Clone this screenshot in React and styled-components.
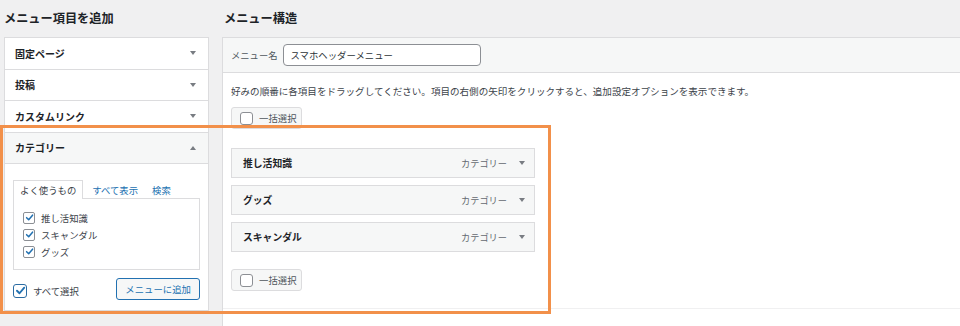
import React from "react";
import styled, { createGlobalStyle } from "styled-components";

const GlobalStyle = createGlobalStyle`
  body {
    margin: 0;
    background: #f0f0f1;
    font-family: "Noto Sans CJK JP", "Noto Sans", sans-serif;
    color: #3c434a;
  }
`;

const Triangle = ({ up }) => (
  <svg width="6" height="4" viewBox="0 0 6 4" style={{ display: "block" }}>
    <path d={up ? "M0 4 L3 0 L6 4 Z" : "M0 0 L6 0 L3 4 Z"} fill="#787c82" />
  </svg>
);

const Check = ({ big }) => (
  <CheckBox $big={big}>
    <svg width={big ? 11 : 9} height={big ? 11 : 9} viewBox="0 0 10 10">
      <path d="M1.8 5.2 L4.1 7.5 L8.4 2.4" fill="none" stroke="#2271b1" strokeWidth="1.7" strokeLinecap="round" strokeLinejoin="round" />
    </svg>
  </CheckBox>
);

const sections = [
  { label: "固定ページ" },
  { label: "投稿" },
  { label: "カスタムリンク" },
];

const categories = ["推し活知識", "スキャンダル", "グッズ"];
const menuItems = ["推し活知識", "グッズ", "スキャンダル"];

const App = () => {
  return (
    <>
      <GlobalStyle />
      <Page>
        <LeftColumn>
          <ColumnTitle>メニュー項目を追加</ColumnTitle>
          <Accordion>
            {sections.map((s) => (
              <SectionTitle key={s.label}>
                {s.label}
                <Triangle />
              </SectionTitle>
            ))}
            <SectionTitle $open>
              カテゴリー
              <Triangle up />
            </SectionTitle>
            <CategoryBody>
              <Tabs>
                <Tab $active>よく使うもの</Tab>
                <Tab>すべて表示</Tab>
                <Tab>検索</Tab>
              </Tabs>
              <CheckList>
                {categories.map((c) => (
                  <CheckRow key={c}>
                    <Check />
                    {c}
                  </CheckRow>
                ))}
              </CheckList>
              <ActionRow>
                <SelectAll>
                  <Check big />
                  すべて選択
                </SelectAll>
                <AddButton>メニューに追加</AddButton>
              </ActionRow>
            </CategoryBody>
          </Accordion>
        </LeftColumn>

        <RightColumn>
          <ColumnTitle $inset>メニュー構造</ColumnTitle>
          <MenuPanel>
            <PanelHeader>
              メニュー名
              <NameInput defaultValue="スマホヘッダーメニュー" />
            </PanelHeader>
            <PanelBody>
              <Hint>好みの順番に各項目をドラッグしてください。項目の右側の矢印をクリックすると、追加設定オプションを表示できます。</Hint>
              <BulkSelect>
                <EmptyBox />
                一括選択
              </BulkSelect>
              <ItemList>
                {menuItems.map((m) => (
                  <MenuItem key={m}>
                    <ItemTitle>{m}</ItemTitle>
                    <ItemMeta>
                      カテゴリー
                      <Triangle />
                    </ItemMeta>
                  </MenuItem>
                ))}
              </ItemList>
              <BulkSelect $bottom>
                <EmptyBox />
                一括選択
              </BulkSelect>
            </PanelBody>
            <PanelFooter />
          </MenuPanel>
        </RightColumn>

        <Highlight />
      </Page>
    </>
  );
};

const Page = styled.div`
  position: relative;
  display: flex;
  gap: 13px;
  padding-left: 4px;
  height: 326px;
  overflow: hidden;
`;

const LeftColumn = styled.div`
  width: 205px;
  flex-shrink: 0;
`;

const RightColumn = styled.div`
  width: 760px;
  flex-shrink: 0;
`;

const ColumnTitle = styled.h2`
  margin: 0;
  height: 37px;
  display: flex;
  align-items: center;
  padding-left: ${(p) => (p.$inset ? "2px" : "0")};
  padding-bottom: 2px;
  box-sizing: border-box;
  font-size: 12.2px;
  font-weight: 700;
  color: #1d2327;
`;

const Accordion = styled.div`
  border: 1px solid #dcdcde;
  background: #fff;
`;

const SectionTitle = styled.div`
  height: 30.5px;
  display: flex;
  align-items: center;
  justify-content: space-between;
  padding: 0 12px 0 10px;
  border-bottom: 1px solid #dcdcde;
  background: ${(p) => (p.$open ? "#f6f7f7" : "#fff")};
  font-size: 10px;
  font-weight: 700;
  color: #1d2327;
`;

const CategoryBody = styled.div`
  padding: 16px 8px 10px;
`;

const Tabs = styled.div`
  display: flex;
  align-items: stretch;
  height: 19px;
  gap: 9px;
`;

const Tab = styled.div`
  display: flex;
  align-items: center;
  padding: 0 ${(p) => (p.$active ? "6px" : "0")};
  margin-right: ${(p) => (p.$active ? "0" : "5px")};
  font-size: 9.4px;
  color: ${(p) => (p.$active ? "#3c434a" : "#2271b1")};
  background: ${(p) => (p.$active ? "#fff" : "transparent")};
  border: ${(p) => (p.$active ? "1px solid #dcdcde" : "none")};
  border-bottom: none;
  position: relative;
  z-index: 1;
`;

const CheckList = styled.div`
  margin-top: -1px;
  border: 1px solid #dcdcde;
  height: 72px;
  box-sizing: border-box;
  padding: 10px 9px 0;
`;

const CheckRow = styled.div`
  height: 17px;
  display: flex;
  align-items: center;
  gap: 6px;
  font-size: 9.4px;
  color: #3c434a;
`;

const CheckBox = styled.span`
  width: ${(p) => (p.$big ? "12px" : "10px")};
  height: ${(p) => (p.$big ? "12px" : "10px")};
  border: ${(p) => (p.$big ? "1.5px solid #2c6ca3" : "1px solid #8c8f94")};
  border-radius: ${(p) => (p.$big ? "3px" : "2px")};
  background: #fff;
  display: flex;
  align-items: center;
  justify-content: center;
  flex-shrink: 0;
`;

const ActionRow = styled.div`
  margin-top: 8px;
  display: flex;
  align-items: center;
  justify-content: space-between;
`;

const SelectAll = styled.div`
  display: flex;
  align-items: center;
  gap: 6px;
  font-size: 9.4px;
  color: #3c434a;
  margin-top: 3px;
`;

const AddButton = styled.button`
  height: 22px;
  padding: 0 8px;
  border: 1px solid #2271b1;
  border-radius: 3px;
  background: #f6f7f7;
  color: #2271b1;
  font-family: inherit;
  font-size: 9.4px;
`;

const MenuPanel = styled.div`
  border: 1px solid #dcdcde;
  border-right: none;
  background: #fff;
`;

const PanelHeader = styled.div`
  height: 34px;
  display: flex;
  align-items: center;
  gap: 5px;
  padding: 0 8px;
  background: #f6f7f7;
  border-bottom: 1px solid #dcdcde;
  font-size: 9.3px;
  color: #50575e;
`;

const NameInput = styled.input`
  width: 198px;
  height: 22px;
  box-sizing: border-box;
  border: 1px solid #8c8f94;
  border-radius: 4px;
  padding: 0 7px;
  font-family: inherit;
  font-size: 9.4px;
  color: #2c3338;
  background: #fff;
`;

const PanelBody = styled.div`
  padding: 11px 8px 17px;
`;

const Hint = styled.p`
  margin: 0;
  line-height: 14px;
  font-size: 9.55px;
  color: #3c434a;
`;

const BulkSelect = styled.div`
  margin-top: ${(p) => (p.$bottom ? "17px" : "9px")};
  width: 71px;
  height: 22px;
  box-sizing: border-box;
  display: flex;
  align-items: center;
  gap: 6px;
  padding-left: 8px;
  background: #f6f7f7;
  border: 1px solid #dcdcde;
  border-radius: 3px;
  font-size: 9.4px;
  color: #50575e;
`;

const EmptyBox = styled.span`
  width: 11px;
  height: 11px;
  border: 1px solid #8c8f94;
  border-radius: 3px;
  background: #fff;
  flex-shrink: 0;
`;

const ItemList = styled.div`
  margin-top: 19px;
  display: flex;
  flex-direction: column;
  gap: 7px;
`;

const MenuItem = styled.div`
  width: 304px;
  height: 30px;
  box-sizing: border-box;
  display: flex;
  align-items: center;
  justify-content: space-between;
  padding: 0 9px 0 11px;
  background: #f6f7f7;
  border: 1px solid #dcdcde;
`;

const ItemTitle = styled.span`
  font-size: 9.8px;
  font-weight: 700;
  color: #1d2327;
`;

const ItemMeta = styled.span`
  display: flex;
  align-items: center;
  gap: 12px;
  font-size: 9.2px;
  color: #646970;
`;

const PanelFooter = styled.div`
  height: 30px;
  border-top: 1px solid #f0f0f1;
`;

const Highlight = styled.div`
  position: absolute;
  left: 0;
  top: 125px;
  width: 551px;
  height: 189px;
  box-sizing: border-box;
  border: 3.5px solid #f2904a;
  pointer-events: none;
`;

export default App;
